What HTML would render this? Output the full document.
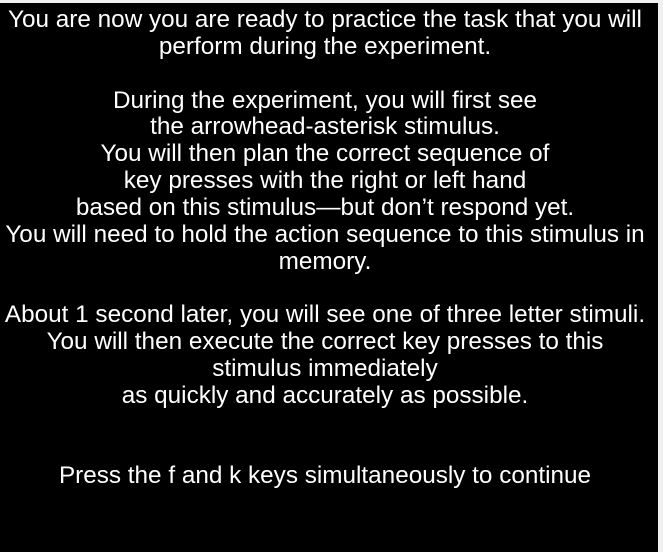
<!DOCTYPE html>
<html><head><style>
html,body{margin:0;padding:0;background:#f0f0f0;width:663px;height:552px;overflow:hidden}
#b{position:absolute;left:0;top:3px;width:658px;height:549px;background:#000}
#t{position:absolute;left:0;top:7px;width:650px;text-align:center;color:#fff;font-family:"Liberation Sans",Arial,sans-serif;font-size:24.3px;line-height:26.85px;white-space:nowrap}
</style></head><body>
<div id="b"></div>
<div id="t">You are now you are ready to practice the task that you will<br>perform during the experiment.<br><br>During the experiment, you will first see<br>the arrowhead-asterisk stimulus.<br>You will then plan the correct sequence of<br>key presses with the right or left hand<br>based on this stimulus—but don’t respond yet.<br>You will need to hold the action sequence to this stimulus in<br>memory.<br><br>About 1 second later, you will see one of three letter stimuli.<br>You will then execute the correct key presses to this<br>stimulus immediately<br>as quickly and accurately as possible.<br><br><br>Press the f and k keys simultaneously to continue</div>
</body></html>
